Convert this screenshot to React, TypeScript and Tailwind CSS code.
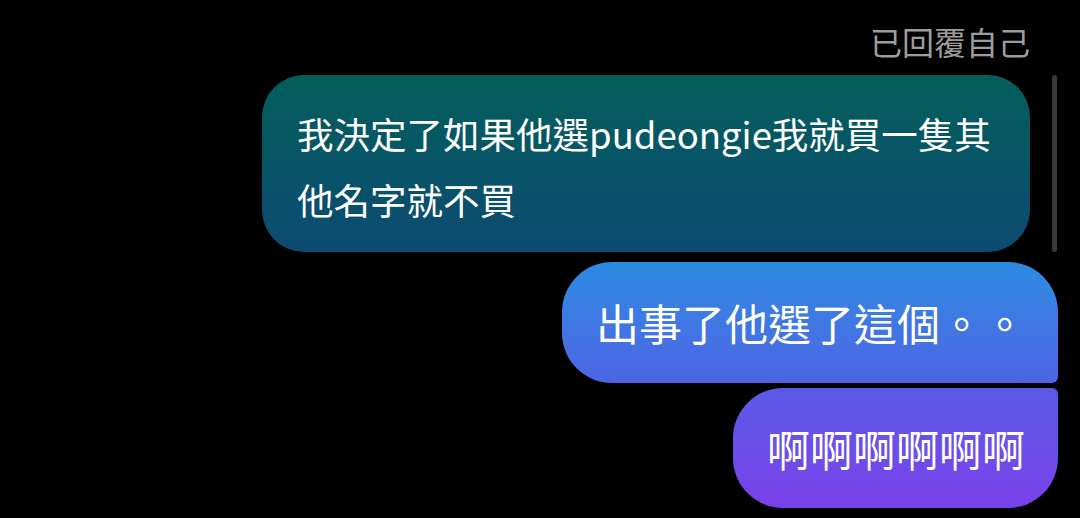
import React from "react";

type Bubble = {
  text: string;
  className: string;
};

const bubbles: Bubble[] = [
  {
    text: "出事了他選了這個。。",
    className:
      "mt-[10px] h-[121px] w-[496px] rounded-[50px] rounded-br-[6px] bg-linear-to-b from-[#2a8be2] to-[#4c64e4]",
  },
  {
    text: "啊啊啊啊啊啊",
    className:
      "mt-[5px] h-[120px] w-[325px] rounded-[50px] rounded-tr-[6px] bg-linear-to-b from-[#5a5ae8] to-[#7a40ea]",
  },
];

const App: React.FC = () => {
  return (
    <div className="relative h-[518px] w-[1080px] overflow-hidden bg-black font-['Noto_Sans_CJK_TC','Noto_Sans',sans-serif]">
      <div className="flex flex-col items-end pt-[21px]">
        <div className="mr-[50px] text-[32px] leading-[40px] text-[#9d9d9d]">
          已回覆自己
        </div>

        <div className="mr-[50px] mt-[14px] w-[768px] rounded-[42px] bg-linear-to-b from-[#055e5a] to-[#0d4a72] pb-[19px] pl-[35px] pr-[30px] pt-[26px] text-[36.5px] leading-[66px] text-white">
          我決定了如果他選pudeongie我就買一隻其他名字就不買
        </div>

        {bubbles.map((b) => (
          <div
            key={b.text}
            className={`mr-[22px] flex items-center pl-[34px] text-[43px] text-white ${b.className}`}
          >
            {b.text}
          </div>
        ))}
      </div>

      {/* overlay scrollbar */}
      <div className="absolute left-[1052px] top-[75px] h-[177px] w-[5px] rounded-full bg-[#3a3a3a]" />
    </div>
  );
};

export default App;
